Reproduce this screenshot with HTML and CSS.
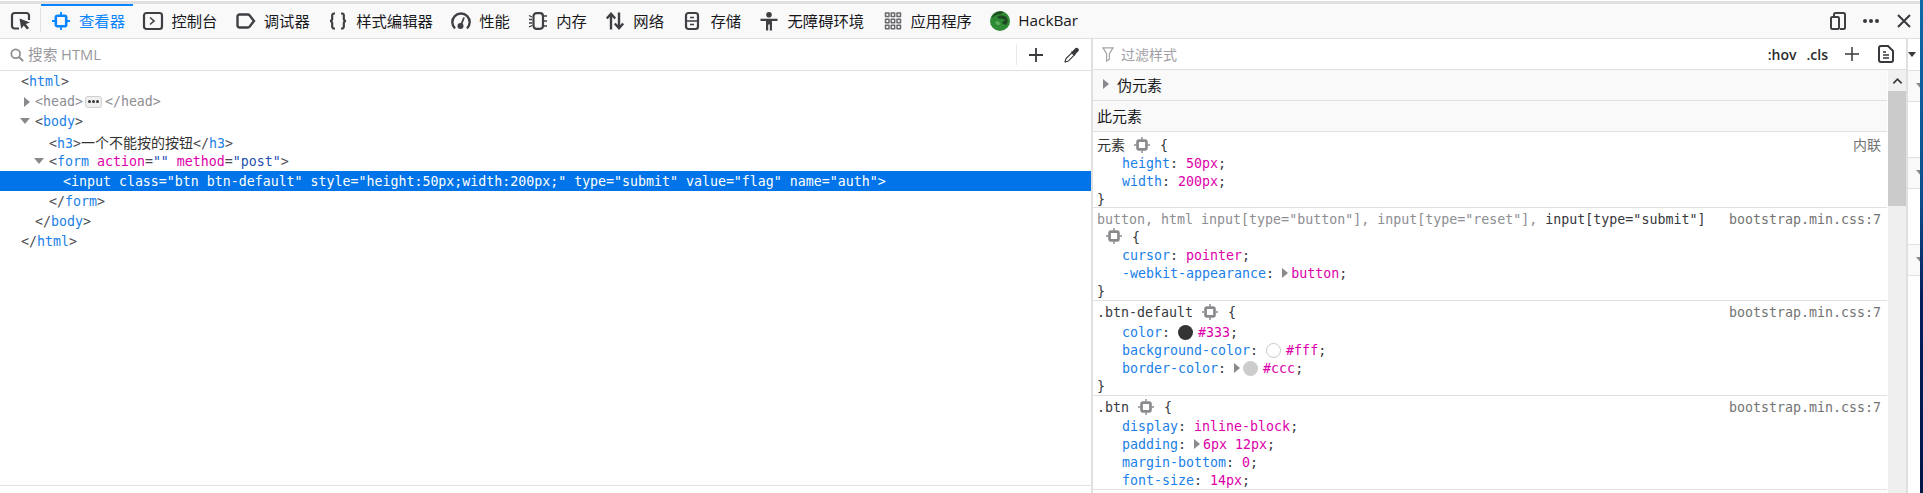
FILE: index.html
```html
<!DOCTYPE html>
<html lang="zh-CN">
<head>
<meta charset="utf-8">
<title>检查器</title>
<link rel="stylesheet" href="styles.css">
</head>
<body>
<svg class="defs" width="0" height="0">
  <symbol id="node" viewBox="0 0 18 18">
    <rect x="4" y="4" width="10" height="10" rx="1.500" fill="none" stroke="currentColor" stroke-width="3"/>
    <path d="M9 0v3M9 15v3M0 9h3M15 9h3" stroke="currentColor" stroke-width="1.600" fill="none"/>
  </symbol>
</svg>
<div class="app">
  <div class="topband"></div>
  <header class="toolbar">
    <button class="pick">
      <svg class="ico wide" viewBox="0 0 20 18"><path d="M8 16.500H3.500A2.500 2.500 0 0 1 1 14V3.500A2.500 2.500 0 0 1 3.500 1h12A2.500 2.500 0 0 1 18 3.500V8" fill="none" stroke="#3f3f44" stroke-width="2.200"/><path d="M8.500 6.500l10.500 4-4.200 1.500 3.200 4-2 1.600-3.200-4-2.600 3.200z" fill="#3f3f44"/></svg>
    </button>
    <div class="tab active">
      <svg class="ico" viewBox="0 0 18 18"><rect x="3.800" y="3.800" width="10.400" height="10.400" rx="1.500" fill="none" stroke="currentColor" stroke-width="2.600"/><path d="M9 0v3M9 15v3M0 9h3M15 9h3" stroke="currentColor" stroke-width="1.800"/></svg><span>查看器</span>
    </div>
    <div class="tab">
      <svg class="ico wide" viewBox="0 0 20 18"><rect x="1" y="1" width="18" height="16" rx="2.500" fill="none" stroke="#3f3f44" stroke-width="2.200"/><path d="M7 5.500l4 3.500-4 3.500" fill="none" stroke="#3f3f44" stroke-width="1.600"/></svg><span>控制台</span>
    </div>
    <div class="tab">
      <svg class="ico wide" viewBox="0 0 20 18"><path d="M3.500 2.500h8.500a2 2 0 0 1 1.500.7l4.500 5.800-4.500 5.800a2 2 0 0 1-1.500.7H3.500a2 2 0 0 1-2-2V4.500a2 2 0 0 1 2-2z" fill="none" stroke="#3f3f44" stroke-width="2.400"/></svg><span>调试器</span>
    </div>
    <div class="tab">
      <svg class="ico" viewBox="0 0 18 18"><path d="M6 1.500H5A1.800 1.800 0 0 0 3.200 3.300v3.400c0 1.300-.7 2-2 2.300 1.300.3 2 1 2 2.300v3.400A1.800 1.800 0 0 0 5 16.500h1M12 1.500h1a1.800 1.800 0 0 1 1.800 1.800v3.400c0 1.300.7 2 2 2.300-1.300.3-2 1-2 2.300v3.400a1.800 1.800 0 0 1-1.800 1.800h-1" fill="none" stroke="#3f3f44" stroke-width="2.200"/></svg><span>样式编辑器</span>
    </div>
    <div class="tab">
      <svg class="ico wide" viewBox="0 0 20 18"><path d="M4 16.500A8.700 8.700 0 1 1 16 16.500" fill="none" stroke="#3f3f44" stroke-width="2.400"/><path d="M13 5.500L10.500 12" stroke="#3f3f44" stroke-width="1.800"/><circle cx="9.500" cy="14" r="3" fill="#3f3f44"/></svg><span>性能</span>
    </div>
    <div class="tab">
      <svg class="ico" viewBox="0 0 18 18"><rect x="4.500" y="1.200" width="9.500" height="15.600" rx="3" fill="none" stroke="#3f3f44" stroke-width="2.200"/><path d="M0 3.500l3 1.500M0 7.500h3M0 11h3M0 15l3-1.500M15 4h3M15 9h3M15 14h3" stroke="#3f3f44" stroke-width="1.300"/></svg><span>内存</span>
    </div>
    <div class="tab">
      <svg class="ico" viewBox="0 0 18 18"><path d="M5 17.500V2M.8 6.500L5 1.800l4.200 4.700M13 .5V16M8.800 11.500L13 16.200l4.200-4.700" fill="none" stroke="#3f3f44" stroke-width="2.400"/></svg><span>网络</span>
    </div>
    <div class="tab">
      <svg class="ico" viewBox="0 0 18 18"><rect x="3" y="1" width="12" height="16" rx="2.500" fill="none" stroke="#3f3f44" stroke-width="2.200"/><path d="M3 9h12M7 5.500h4M7 12.500h4" stroke="#3f3f44" stroke-width="1.500"/></svg><span>存储</span>
    </div>
    <div class="tab">
      <svg class="ico" viewBox="0 0 18 18"><circle cx="9" cy="2.800" r="2.800" fill="#3f3f44"/><path d="M.5 6.800h17V9H12v9.500H9.800V12.500H8.200v6H6V9H.5z" fill="#3f3f44"/></svg><span>无障碍环境</span>
    </div>
    <div class="tab">
      <svg class="ico" viewBox="0 0 18 18"><path d="M1.500 1h3.500v3.500H1.500zM7.200 1h3.500v3.500H7.200zM13 1h3.500v3.500H13zM1.500 7.200h3.500v3.500H1.500zM7.200 7.200h3.500v3.500H7.200zM13 7.200h3.500v3.500H13zM1.500 13.300h3.500v3.500H1.500zM7.200 13.300h3.500v3.500H7.200zM13 13.300h3.500v3.500H13z" fill="none" stroke="#6a6a6e" stroke-width="1.500" stroke-linejoin="round"/></svg><span>应用程序</span>
    </div>
    <div class="tab hackbar">
      <svg class="hack-ico" viewBox="0 0 20 20"><circle cx="10" cy="10" r="10" fill="#2f8a35"/><path d="M2 7C3 2.500 8 0 12 .5 15 1 12 3 8 3.500 5 4 4 6 2 7z" fill="#1d4a22"/><path d="M7 6c3-2 8-2 10 1 1 2 1 5-1 7-2-1-4-1-4-3 1-1 3-1 3-2-2-2-6 0-8-3z" fill="#1d4a22"/><path d="M6 10c2 0 3 1 4 2s0 2-2 2-3-2-2-4z" fill="#5fae5f"/></svg><span>HackBar</span>
    </div>
    <div class="toolbar-end">
      <svg class="ico" viewBox="0 0 18 18"><path d="M5 4V2.500A1.500 1.500 0 0 1 6.500 1h8A1.500 1.500 0 0 1 16 2.500v13a1.500 1.500 0 0 1-1.500 1.500H11" fill="none" stroke="#3f3f44" stroke-width="2"/><rect x="2" y="5" width="8" height="12" rx="1.200" fill="none" stroke="#3f3f44" stroke-width="2"/></svg>
      <svg class="ico dots" viewBox="0 0 18 18"><circle cx="3" cy="9" r="2" fill="#38383d"/><circle cx="9" cy="9" r="2" fill="#38383d"/><circle cx="15" cy="9" r="2" fill="#38383d"/></svg>
      <svg class="ico close" viewBox="0 0 14 14"><path d="M1 1l12 12M13 1L1 13" stroke="#38383d" stroke-width="2"/></svg>
    </div>
  </header>
  <main class="panes">
    <section class="markup">
      <div class="searchbar">
        <svg class="search-ico" viewBox="0 0 16 16"><circle cx="6.500" cy="6.500" r="5" fill="none" stroke="#8f8f93" stroke-width="2"/><path d="M10.500 10.500l4.500 4.500" stroke="#8f8f93" stroke-width="2.400"/></svg>
        <span class="search-text">搜索 HTML</span>
        <span class="search-actions">
          <svg class="plus" viewBox="0 0 16 16"><path d="M8 1v14M1 8h14" stroke="#38383d" stroke-width="1.800"/></svg>
          <svg class="dropper" viewBox="0 0 16 16"><path d="M7.800 5.800l2.400 2.400-5.700 5.700-3.200 1.200-.4-.4 1.200-3.200z" fill="#fff" stroke="#38383d" stroke-width="1.100" stroke-linejoin="round"/><path d="M6.800 4.800l1.900-.9L11 1.500c1-1 2.300-1 3.200-.1s.9 2.200-.1 3.200L11.700 7l-.9 1.900z" fill="#38383d"/></svg>
        </span>
      </div>
      <div class="tree">
        <div class="row l0">&lt;<span class="t">html</span>&gt;</div>
        <div class="row l1 dim"><i class="tw-closed"></i>&lt;head&gt;<span class="badge"><b></b><b></b><b></b></span>&lt;/head&gt;</div>
        <div class="row l1"><i class="tw-open"></i>&lt;<span class="t">body</span>&gt;</div>
        <div class="row l2">&lt;<span class="t">h3</span>&gt;<span class="cjk">一个不能按的按钮</span>&lt;/<span class="t">h3</span>&gt;</div>
        <div class="row l2"><i class="tw-open"></i>&lt;<span class="t">form</span> <span class="a">action</span>=<span class="v">""</span> <span class="a">method</span>=<span class="v">"post"</span>&gt;</div>
        <div class="row l3 selected">&lt;input class="btn btn-default" style="height:50px;width:200px;" type="submit" value="flag" name="auth"&gt;</div>
        <div class="row l2">&lt;/<span class="t">form</span>&gt;</div>
        <div class="row l1">&lt;/<span class="t">body</span>&gt;</div>
        <div class="row l0">&lt;/<span class="t">html</span>&gt;</div>
      </div>
      <div class="crumbs"></div>
    </section>
    <div class="divider"></div>
    <section class="rules">
      <div class="filterbar">
        <svg class="filter-ico" viewBox="0 0 12 16"><path d="M.7 1h10.600L7.500 7v6l-3 2V7z" fill="none" stroke="#a5a5a8" stroke-width="1.300"/></svg>
        <span class="filter-text">过滤样式</span>
        <span class="filter-actions">
          <span class="pill">:hov</span>
          <span class="pill">.cls</span>
          <svg class="plus" viewBox="0 0 16 16"><path d="M8 1v14M1 8h14" stroke="#38383d" stroke-width="1.500"/></svg>
          <svg class="doc" viewBox="0 0 16 18"><path d="M3 1h7l5 5v9a2 2 0 0 1-2 2H3a2 2 0 0 1-2-2V3a2 2 0 0 1 2-2z" fill="none" stroke="#38383d" stroke-width="2"/><path d="M5 7h3M5 10h6M5 13h6" stroke="#38383d" stroke-width="1.300"/></svg>
        </span>
      </div>
      <div class="rules-body">
        <div class="rule-list">
          <div class="section-head"><i class="tw-closed"></i>伪元素</div>
          <div class="section-head plain">此元素</div>
          <div class="rule first">
            <div class="sel"><span><span class="cjk">元素</span><svg class="node"><use href="#node"/></svg>{</span><span class="src cjk">内联</span></div>
            <div class="decl"><span class="n">height</span>: <span class="val">50px</span>;</div>
            <div class="decl"><span class="n">width</span>: <span class="val">200px</span>;</div>
            <div class="close-brace">}</div>
          </div>
          <div class="rule wrap">
            <div class="sel"><span><span class="off">button, html input[type="button"], input[type="reset"], </span>input[type="submit"]</span><span class="src">bootstrap.min.css:7</span></div>
            <div class="sel second"><svg class="node"><use href="#node"/></svg>{</div>
            <div class="decl"><span class="n">cursor</span>: <span class="val">pointer</span>;</div>
            <div class="decl"><span class="n">-webkit-appearance</span>: <i class="tw-closed inline"></i><span class="val">button</span>;</div>
            <div class="close-brace">}</div>
          </div>
          <div class="rule">
            <div class="sel"><span>.btn-default<svg class="node"><use href="#node"/></svg>{</span><span class="src">bootstrap.min.css:7</span></div>
            <div class="decl"><span class="n">color</span>: <i class="swatch dark"></i><span class="val">#333</span>;</div>
            <div class="decl"><span class="n">background-color</span>: <i class="swatch white"></i><span class="val">#fff</span>;</div>
            <div class="decl"><span class="n">border-color</span>: <i class="tw-closed inline"></i><i class="swatch grey"></i><span class="val">#ccc</span>;</div>
            <div class="close-brace">}</div>
          </div>
          <div class="rule last">
            <div class="sel"><span>.btn<svg class="node"><use href="#node"/></svg>{</span><span class="src">bootstrap.min.css:7</span></div>
            <div class="decl"><span class="n">display</span>: <span class="val">inline-block</span>;</div>
            <div class="decl"><span class="n">padding</span>: <i class="tw-closed inline"></i><span class="val">6px 12px</span>;</div>
            <div class="decl"><span class="n">margin-bottom</span>: <span class="val">0</span>;</div>
            <div class="decl"><span class="n">font-size</span>: <span class="val">14px</span>;</div>
          </div>
        </div>
        <div class="scrollbar">
          <div class="scroll-up"><svg viewBox="0 0 12 8"><path d="M1.500 6.500L6 2l4.500 4.500" fill="none" stroke="#38383d" stroke-width="1.800"/></svg></div>
          <div class="scroll-thumb"></div>
        </div>
      </div>
    </section>
    <div class="divider"></div>
    <aside class="strip">
      <div class="strip-top"><i class="tw-small"></i></div>
      <div class="strip-head"><i class="tw-clip"></i></div>
      <div class="strip-body"></div>
      <div class="strip-head"><i class="tw-clip"></i></div>
      <div class="strip-body"></div>
      <div class="strip-head"><i class="tw-clip"></i></div>
    </aside>
  </main>
</div>
<div class="wallpaper"></div>
</body>
</html>
```
FILE: styles.css
```css
* { box-sizing: border-box; }
html, body { margin: 0; height: 493px; overflow: hidden; background: #fff; }
body { display: flex; font-family: "Open Sans", "Noto Sans CJK SC", sans-serif; color: #18181a; }
.defs { position: absolute; }
.app { width: 1920px; height: 493px; display: flex; flex-direction: column; flex: none; }
.wallpaper { flex: 1; background: linear-gradient(180deg, #0a6aa8 0%, #0b4f8c 40%, #04205c 60%, #001648 100%); }
.topband { height: 4px; flex: none; background: #e0e0e1; border-top: 1px solid #fff; }

.toolbar { height: 35px; flex: none; display: flex; align-items: stretch; background: #f9f9fa; border-bottom: 1px solid #e0e0e1; font-size: 15.33px; color: #18181a; }
.pick { width: 41px; flex: none; padding: 0; border: 0; background: none; position: relative; display: flex; align-items: center; justify-content: center; }
.pick::after { content: ""; position: absolute; right: 0; top: 4px; bottom: 6px; width: 1px; background: #e0e0e1; }
.ico { width: 18px; height: 18px; flex: none; overflow: visible; }
.ico.wide { width: 20px; margin: 0 -1px; height: 18px; }
.tab { display: flex; align-items: center; gap: 9px; padding: 0 8.4px 0 11px; white-space: nowrap; }
.tab span { margin-bottom: 2px; }
.tab.active { color: #0a84ff; border-top: 2px solid #0a84ff; padding-bottom: 2px; }
.hack-ico { width: 20px; height: 20px; margin: 0 -1px; flex: none; }
.toolbar-end { margin-left: auto; display: flex; align-items: center; padding-right: 9px; }
.dots { margin-left: 15px; }
.close { width: 14px; height: 14px; margin-left: 17px; }

.panes { height: 454px; display: flex; flex: none; }
.divider { width: 2px; flex: none; background: #e0e0e1; }

.markup { width: 1091px; flex: none; display: flex; flex-direction: column; }
.searchbar { height: 32px; flex: none; display: flex; align-items: center; border-bottom: 1px solid #e0e0e1; padding-left: 10px; }
.search-ico { width: 14px; height: 14px; flex: none; }
.search-text { margin: 0 0 2px 4px; font-size: 14.67px; color: #98989c; }
.search-actions { margin-left: auto; display: flex; align-items: center; gap: 20px; height: 21px; border-left: 1px solid #e9e9ea; padding-left: 11px; padding-right: 11px; }
.plus { width: 16px; height: 16px; }
.dropper { width: 16px; height: 16px; }

.tree { flex: 1; font: 13.27px/22px "DejaVu Sans Mono", "Noto Sans CJK SC", monospace; color: #4a4a4f; }
.row { height: 20px; white-space: pre; }
.l0 { padding-left: 21px; }
.l1 { padding-left: 35px; }
.l2 { padding-left: 49px; }
.l3 { padding-left: 63px; }
.dim { color: #8d8d92; }
.t { color: #1a7fe8; }
.a { color: #dd00a9; }
.v { color: #1d4fb0; }
.cjk { font-family: "Noto Sans CJK SC", sans-serif; font-size: 14px; color: #333; }
.selected { background: #0074e8; color: #fff; }
.badge { display: inline-flex; align-items: center; justify-content: center; gap: 1px; width: 17px; height: 12px; margin: 0 3px 0 2px; background: #f0f0f1; border: 1px solid #cfcfd1; border-radius: 3px; vertical-align: 3px; }
.badge b { width: 3px; height: 3px; background: #38383d; border-radius: 50%; }
.tw-open { display: inline-block; width: 0; height: 0; margin-left: -15px; margin-right: 5px; border-top: 6px solid #8a8a8e; border-left: 5px solid transparent; border-right: 5px solid transparent; vertical-align: 2px; }
.tw-closed { display: inline-block; width: 0; height: 0; margin-left: -11px; margin-right: 5px; border-left: 6.5px solid #8a8a8e; border-top: 5.5px solid transparent; border-bottom: 5.5px solid transparent; vertical-align: -1px; }
.crumbs { height: 8px; flex: none; border-top: 1px solid #e0e0e1; }

.rules { flex: 1; min-width: 0; display: flex; flex-direction: column; }
.filterbar { height: 31px; flex: none; display: flex; align-items: center; padding: 0 12px 0 9px; border-bottom: 1px solid #e0e0e1; }
.filter-ico { width: 12px; height: 15px; flex: none; }
.filter-text { margin-left: 7px; font-size: 14px; color: #a0a0a4; }
.filter-actions { margin-left: auto; display: flex; align-items: center; }
.pill { font-size: 14px; font-weight: 600; color: #2a2a2e; margin-right: 10px; }
.filter-actions .plus { margin: 0 18px 0 6px; }
.doc { width: 16px; height: 18px; }

.rules-body { flex: 1; min-height: 0; display: flex; }
.rule-list { flex: 1; min-width: 0; overflow: hidden; font: 13.3px/20px "DejaVu Sans Mono", "Noto Sans CJK SC", monospace; color: #38383d; }
.section-head { height: 31px; display: flex; align-items: center; padding: 0 0 2px 10px; background: #f9f9fa; border-bottom: 1px solid #e0e0e1; font: 15px "Open Sans", "Noto Sans CJK SC", sans-serif; color: #18181a; }
.section-head .tw-closed { margin-left: 0; margin-right: 8px; }
.section-head.plain { padding-left: 4px; }
.rule { padding-top: 2px; border-bottom: 1px solid #e0e0e1; }
.sel { display: flex; justify-content: space-between; height: 18px; margin-bottom: 2px; padding: 0 6px 0 4px; white-space: pre; }
.wrap .sel { margin-bottom: 0; }
.last .sel { margin-bottom: 1px; }
.sel.second { justify-content: flex-start; padding-left: 4px; }
.sel .cjk { color: #333; }
.off { color: #8d8d92; }
.src { color: #737373; }
.src.cjk { color: #737373; }
.node { width: 16px; height: 16px; margin: 0 10px 0 9px; color: #8a8a8e; vertical-align: -3px; }
.decl { height: 18px; padding-left: 29px; white-space: pre; }
.n { color: #1a7fe8; }
.val { color: #dd00a9; }
.close-brace { height: 18px; padding-left: 4px; }
.first .close-brace { height: 17px; }
.tw-closed.inline { margin: 0 3px 0 0; vertical-align: 0; }
.swatch { display: inline-block; width: 15px; height: 15px; border-radius: 50%; margin-right: 5px; vertical-align: -3px; }
.swatch.dark { background: #333; }
.swatch.white { background: #fff; border: 1px solid #c8c8c8; }
.swatch.grey { background: #ccc; }

.scrollbar { width: 18px; flex: none; margin-left: 1px; background: #efefef; display: flex; flex-direction: column; }
.scroll-up { height: 21px; flex: none; display: flex; align-items: center; justify-content: center; background: #f0f0f0; }
.scroll-up svg { width: 11px; height: 8px; }
.scroll-thumb { height: 115px; flex: none; background: #cbcbcb; }

.strip { width: 12px; flex: none; overflow: hidden; }
.strip-top { height: 31px; padding-top: 13px; }
.strip-head { height: 32px; background: #f9f9fa; border-top: 1px solid #e0e0e1; border-bottom: 1px solid #e0e0e1; padding: 12px 0 0 8px; }
.strip-body { height: 55px; }
.tw-small { display: block; width: 0; height: 0; border-top: 5px solid #38383d; border-left: 4px solid transparent; border-right: 4px solid transparent; }
.tw-clip { display: block; width: 0; height: 0; border-top: 6px solid #8a8a8e; border-left: 5px solid transparent; border-right: 5px solid transparent; }
```
